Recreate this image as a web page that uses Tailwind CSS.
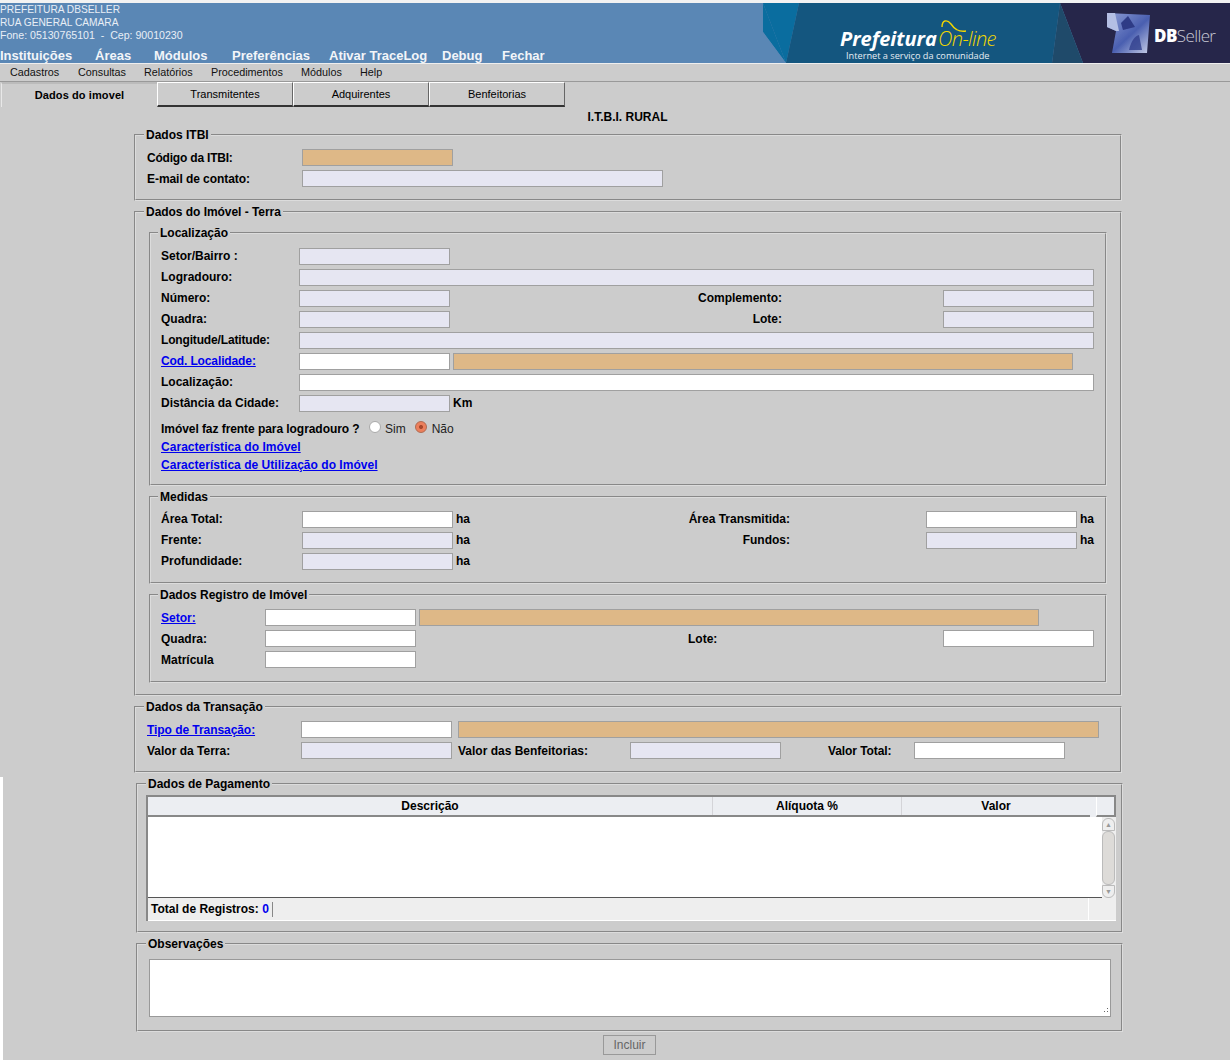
<!DOCTYPE html>
<html lang="pt-BR">
<head>
    <meta charset="UTF-8">
    <title>I.T.B.I. Rural</title>
    <script src="https://cdn.jsdelivr.net/npm/@tailwindcss/browser@4"></script>
</head>
<body class="bg-white font-['Liberation_Sans',Arial,sans-serif] text-[12px] text-black overflow-hidden">

    <!-- Header -->
    <div class="h-[3px] bg-[#f2f2f2]"></div>
    <header class="relative h-[60px] bg-[#5a87b5] text-white">
        <div class="text-[10.2px] leading-[13px] text-[#e8eef5]">
            <p>PREFEITURA DBSELLER</p>
            <p>RUA GENERAL CAMARA</p>
            <p class="text-[10.6px] whitespace-pre">Fone: 05130765101  -  Cep: 90010230</p>
        </div>
        <nav class="flex mt-[6px] text-[13px] leading-[15px] font-bold text-[#f2f5f9]">
            <a class="w-[95px]">Instituições</a>
            <a class="w-[59px]">Áreas</a>
            <a class="w-[78px]">Módulos</a>
            <a class="w-[97px]">Preferências</a>
            <a class="w-[113px]">Ativar TraceLog</a>
            <a class="w-[60px]">Debug</a>
            <a>Fechar</a>
        </nav>

        <!-- Banner -->
        <div class="absolute top-0 right-0 w-[467px] h-[60px] overflow-hidden">
            <svg width="467" height="60" viewBox="0 0 467 60" class="absolute inset-0">
                <defs>
                    <linearGradient id="cube" x1="0" y1="0" x2="1" y2="1">
                        <stop offset="0" stop-color="#8f9fd6"/>
                        <stop offset="0.55" stop-color="#4a5fb0"/>
                        <stop offset="1" stop-color="#c8cfe8"/>
                    </linearGradient>
                    <filter id="soft"><feGaussianBlur stdDeviation="0.6"/></filter>
                </defs>
                <polygon points="0,0 36,0 23,60" fill="#0a6d9f"/>
                <polygon points="0,0 0,29 23,60" fill="#0a6d9f"/>
                <polygon points="0,29 23,60 0,60" fill="#5a87b5"/>
                <polygon points="36,0 297,0 289,60 23,60" fill="#14567f"/>
                <polygon points="297,0 467,0 467,60 320,60" fill="#26264a"/>
                <polygon points="297,0 320,60 289,60" fill="#1f4a6a"/>
                <path d="M179 24 C179 17 184 16 188 21 C192 27 196 29 203 28" fill="none" stroke="#f2d600" stroke-width="1.4"/>
                <!-- DBSeller cube -->
                <g filter="url(#soft)">
                    <polygon points="344,10 387,12 384,50 349,50 353,28 344,24" fill="url(#cube)"/>
                    <polygon points="344,10 352,10 356,28 353,28 344,24" fill="#b4bfe4"/>
                    <polygon points="358,20 365,13 372,24 360,27" fill="#2d3a86"/>
                    <path d="M366 47 C368 38 372 33 376 32 L379 47 Z" fill="#2f3f8c" opacity="0.8"/>
                </g>
            </svg>
            <span class="absolute left-[77px] top-[25px] font-['Open_Sans',sans-serif] italic font-bold text-[20px] leading-[22px] text-white">Prefeitura</span>
            <span class="absolute left-[175px] top-[25px] font-['Open_Sans',sans-serif] italic font-light text-[20px] leading-[22px] tracking-[-0.6px] text-[#f2d600]">On-line</span>
            <span class="absolute left-[83px] top-[47px] font-['Open_Sans',sans-serif] text-[9.2px] leading-[11px] text-[#e6edf3]">Internet a serviço da comunidade</span>
            <span class="absolute left-[391px] top-[21px] font-['Open_Sans',sans-serif] font-light text-[17px] leading-[24px] tracking-[-0.6px] text-[#c9cad6]"><b class="text-white font-extrabold">DB</b>Seller</span>
        </div>
    </header>
    <div class="h-px bg-[#eeeeee]"></div>

    <div class="bg-[#cccccc] h-[713px]">
        <!-- Menu -->
        <nav class="flex h-[17px] items-center pl-[10px] text-[10.8px] text-[#111]">
            <a class="w-[68px]">Cadastros</a>
            <a class="w-[66px]">Consultas</a>
            <a class="w-[67px]">Relatórios</a>
            <a class="w-[90px]">Procedimentos</a>
            <a class="w-[59px]">Módulos</a>
            <a>Help</a>
        </nav>
        <div class="h-px bg-[#999999]"></div>

        <!-- Tabs -->
        <div class="flex h-[25px] text-[11px]">
            <div class="ml-[1px] w-[156px] flex items-center justify-center pb-[1px] border-l border-[#e8e8e8] border-t-2 border-t-[#bbbbbb] font-bold tracking-[0.1px]">Dados do imovel</div>
            <div class="w-[136px] flex items-center justify-center border-l border-t border-white border-r border-r-[#666] border-b-2 border-b-[#333]">Transmitentes</div>
            <div class="w-[136px] flex items-center justify-center border-l border-t border-white border-r border-r-[#666] border-b-2 border-b-[#333]">Adquirentes</div>
            <div class="w-[136px] flex items-center justify-center border-l border-t border-white border-r border-r-[#666] border-b-2 border-b-[#333]">Benfeitorias</div>
        </div>

        <h1 class="h-[20px] pt-[3px] text-center font-bold leading-[14px] pl-[25px]">I.T.B.I. RURAL</h1>

        <form class="ml-[134px] w-[988px]">
            <!-- Dados ITBI -->
            <fieldset class="border-2 [border-style:groove] border-[#dcdcdc] pl-[11px] pb-[10px] pt-[5px] mt-px">
                <legend class="ml-[-3px] px-[2px] font-bold leading-[14px]">Dados ITBI</legend>
                <div class="flex items-center h-[21px]">
                    <label class="w-[155px] font-bold tracking-[-0.2px]">Código da ITBI:</label>
                    <input class="w-[151px] h-[17px] border border-[#a0a0a0] bg-[#deb887]">
                </div>
                <div class="flex items-center h-[21px]">
                    <label class="w-[155px] font-bold tracking-[-0.06px]">E-mail de contato:</label>
                    <input class="w-[361px] h-[17px] border border-[#a0a0a0] bg-[#e6e6f2]">
                </div>
            </fieldset>

            <!-- Dados do Imovel -->
            <fieldset class="border-2 [border-style:groove] border-[#dcdcdc] px-[13px] pb-[11px] pt-[7px] mt-[4px]">
                <legend class="ml-[-5px] px-[2px] font-bold leading-[14px] tracking-[-0.04px]">Dados do Imóvel - Terra</legend>

                <fieldset class="border-2 [border-style:groove] border-[#dcdcdc] pl-[10px] pr-[11px] pb-[10px] pt-[6px]">
                    <legend class="ml-[-3px] px-[2px] font-bold leading-[14px]">Localização</legend>
                    <div class="flex items-center h-[21px]">
                        <label class="w-[138px] mb-[2px] font-bold">Setor/Bairro :</label>
                        <input class="w-[151px] h-[17px] border border-[#a0a0a0] bg-[#e6e6f2]">
                    </div>
                    <div class="flex items-center h-[21px]">
                        <label class="w-[138px] mb-[2px] font-bold">Logradouro:</label>
                        <input class="flex-1 h-[17px] border border-[#a0a0a0] bg-[#e6e6f2]">
                    </div>
                    <div class="flex items-center h-[21px]">
                        <label class="w-[138px] mb-[2px] font-bold">Número:</label>
                        <input class="w-[151px] h-[17px] border border-[#a0a0a0] bg-[#e6e6f2]">
                        <label class="w-[332px] mb-[2px] text-right font-bold">Complemento:</label>
                        <input class="ml-auto w-[151px] h-[17px] border border-[#a0a0a0] bg-[#e6e6f2]">
                    </div>
                    <div class="flex items-center h-[21px]">
                        <label class="w-[138px] mb-[2px] font-bold">Quadra:</label>
                        <input class="w-[151px] h-[17px] border border-[#a0a0a0] bg-[#e6e6f2]">
                        <label class="w-[332px] mb-[2px] text-right font-bold">Lote:</label>
                        <input class="ml-auto w-[151px] h-[17px] border border-[#a0a0a0] bg-[#e6e6f2]">
                    </div>
                    <div class="flex items-center h-[21px]">
                        <label class="w-[138px] mb-[2px] font-bold tracking-[-0.16px]">Longitude/Latitude:</label>
                        <input class="flex-1 h-[17px] border border-[#a0a0a0] bg-[#e6e6f2]">
                    </div>
                    <div class="flex items-center h-[21px]">
                        <a class="w-[138px] mb-[2px] font-bold text-[#0000ee] underline tracking-[-0.12px]">Cod. Localidade:</a>
                        <input class="w-[151px] h-[17px] border border-[#a0a0a0] bg-white">
                        <input class="ml-[3px] w-[620px] h-[17px] border border-[#a0a0a0] bg-[#deb887]">
                    </div>
                    <div class="flex items-center h-[21px]">
                        <label class="w-[138px] mb-[2px] font-bold">Localização:</label>
                        <input class="flex-1 h-[17px] border border-[#a0a0a0] bg-white">
                    </div>
                    <div class="flex items-center h-[21px]">
                        <label class="w-[138px] mb-[2px] font-bold">Distância da Cidade:</label>
                        <input class="w-[151px] h-[17px] border border-[#a0a0a0] bg-[#e6e6f2]">
                        <span class="ml-[3px] mb-[2px] font-bold">Km</span>
                    </div>
                    <div class="flex items-center h-[19px] mt-[5px]">
                        <label class="w-[199px] font-bold whitespace-nowrap tracking-[-0.06px]">Imóvel faz frente para logradouro ?</label>
                        <input type="radio" name="frente" class="appearance-none ml-[9px] mb-[4px] w-[12px] h-[12px] rounded-full border border-[#aaaaaa] bg-white">
                        <span class="ml-[4px] text-[#222]">Sim</span>
                        <input type="radio" name="frente" checked class="appearance-none ml-[9px] mb-[4px] w-[12px] h-[12px] rounded-full border border-[#b06a50] bg-[radial-gradient(circle,#a8482c_22%,#ec7f5c_34%)]">
                        <span class="ml-[5px] text-[#222]">Não</span>
                    </div>
                    <div class="flex items-center h-[18px]"><a class="font-bold text-[#0000ee] underline tracking-[0.04px]">Característica do Imóvel</a></div>
                    <div class="flex items-center h-[18px]"><a class="font-bold text-[#0000ee] underline tracking-[0.03px]">Característica de Utilização do Imóvel</a></div>
                </fieldset>

                <fieldset class="border-2 [border-style:groove] border-[#dcdcdc] pl-[10px] pr-[11px] pb-[10px] pt-[5px] mt-[4px]">
                    <legend class="ml-[-3px] px-[2px] font-bold leading-[14px]">Medidas</legend>
                    <div class="flex items-center h-[21px]">
                        <label class="w-[141px] mb-[2px] font-bold">Área Total:</label>
                        <input class="w-[151px] h-[17px] border border-[#a0a0a0] bg-white">
                        <span class="ml-[3px] mb-[2px] w-[17px] font-bold">ha</span>
                        <label class="w-[317px] mb-[2px] text-right font-bold">Área Transmitida:</label>
                        <input class="ml-auto w-[151px] h-[17px] border border-[#a0a0a0] bg-white">
                        <span class="ml-[3px] mb-[2px] font-bold">ha</span>
                    </div>
                    <div class="flex items-center h-[21px]">
                        <label class="w-[141px] mb-[2px] font-bold">Frente:</label>
                        <input class="w-[151px] h-[17px] border border-[#a0a0a0] bg-[#e6e6f2]">
                        <span class="ml-[3px] mb-[2px] w-[17px] font-bold">ha</span>
                        <label class="w-[317px] mb-[2px] text-right font-bold">Fundos:</label>
                        <input class="ml-auto w-[151px] h-[17px] border border-[#a0a0a0] bg-[#e6e6f2]">
                        <span class="ml-[3px] mb-[2px] font-bold">ha</span>
                    </div>
                    <div class="flex items-center h-[21px]">
                        <label class="w-[141px] mb-[2px] font-bold">Profundidade:</label>
                        <input class="w-[151px] h-[17px] border border-[#a0a0a0] bg-[#e6e6f2]">
                        <span class="ml-[3px] mb-[2px] font-bold">ha</span>
                    </div>
                </fieldset>

                <fieldset class="border-2 [border-style:groove] border-[#dcdcdc] pl-[10px] pr-[11px] pb-[11px] pt-[5px] mt-[4px]">
                    <legend class="ml-[-3px] px-[2px] font-bold leading-[14px]">Dados Registro de Imóvel</legend>
                    <div class="flex items-center h-[21px]">
                        <a class="w-[104px] font-bold text-[#0000ee] underline">Setor:</a>
                        <input class="w-[151px] h-[17px] border border-[#a0a0a0] bg-white">
                        <input class="ml-[3px] w-[620px] h-[17px] border border-[#a0a0a0] bg-[#deb887]">
                    </div>
                    <div class="flex items-center h-[21px]">
                        <label class="w-[104px] font-bold">Quadra:</label>
                        <input class="w-[151px] h-[17px] border border-[#a0a0a0] bg-white">
                        <label class="ml-[272px] font-bold">Lote:</label>
                        <input class="ml-auto w-[151px] h-[17px] border border-[#a0a0a0] bg-white">
                    </div>
                    <div class="flex items-center h-[21px]">
                        <label class="w-[104px] font-bold">Matrícula</label>
                        <input class="w-[151px] h-[17px] border border-[#a0a0a0] bg-white">
                    </div>
                </fieldset>
            </fieldset>

            <!-- Dados da Transacao -->
            <fieldset class="border-2 [border-style:groove] border-[#dcdcdc] pl-[11px] pb-[10px] pt-[5px] mt-[4px]">
                <legend class="ml-[-3px] px-[2px] font-bold leading-[14px]">Dados da Transação</legend>
                <div class="flex items-center h-[21px]">
                    <a class="w-[154px] font-bold text-[#0000ee] underline tracking-[-0.06px]">Tipo de Transação:</a>
                    <input class="w-[151px] h-[17px] border border-[#a0a0a0] bg-white">
                    <input class="ml-[6px] w-[641px] h-[17px] border border-[#a0a0a0] bg-[#deb887]">
                </div>
                <div class="flex items-center h-[21px]">
                    <label class="w-[154px] font-bold">Valor da Terra:</label>
                    <input class="w-[151px] h-[17px] border border-[#a0a0a0] bg-[#e6e6f2]">
                    <label class="ml-[6px] w-[172px] font-bold">Valor das Benfeitorias:</label>
                    <input class="w-[151px] h-[17px] border border-[#a0a0a0] bg-[#e6e6f2]">
                    <label class="ml-[47px] w-[86px] font-bold tracking-[-0.08px]">Valor Total:</label>
                    <input class="w-[151px] h-[17px] border border-[#a0a0a0] bg-white">
                </div>
            </fieldset>
        </form>
    </div>

    <div class="ml-[3px] h-[283px] bg-[#cccccc] overflow-hidden">
        <div class="ml-[133px] w-[987px]">
            <!-- Dados de Pagamento -->
            <fieldset class="border-2 [border-style:groove] border-[#dcdcdc] pl-[8px] pb-[10px] pt-[4px]">
                <legend class="px-[2px] font-bold leading-[14px]">Dados de Pagamento</legend>
                <div class="w-[970px] border-t-2 border-l-2 border-[#888888] bg-white">
                    <div class="flex h-[20px] bg-[#eceef2]">
                        <div class="flex w-[942px] border-b-2 border-[#888888] font-bold">
                            <div class="w-[565px] text-center leading-[18px] border-r border-[#d4d4d8]">Descrição</div>
                            <div class="w-[189px] text-center leading-[18px] border-r border-[#d4d4d8]">Alíquota %</div>
                            <div class="flex-1 text-center leading-[18px]">Valor</div>
                        </div>
                        <div class="w-[6px]"></div>
                        <div class="flex-1 border-l border-l-white border-r-2 border-b-2 border-[#888888]"></div>
                    </div>
                    <div class="flex h-[81px]">
                        <div class="w-[954px] border-b border-b-[#555555]"></div>
                        <div class="flex-1 flex flex-col bg-[#eeeeee] pt-px pr-px">
                            <div class="h-[13px] border border-[#bbbbbb] rounded-t-[6px] text-[#999] text-[7px] leading-[11px] text-center">▲</div>
                            <div class="h-[54px] border border-[#bbbbbb] rounded-[6px] bg-[#dddbd8]"></div>
                            <div class="h-[13px] border border-[#bbbbbb] rounded-b-[6px] text-[#999] text-[7px] leading-[11px] text-center">▼</div>
                        </div>
                    </div>
                    <div class="flex h-[23px] bg-[#eeeeee] border-b border-b-white">
                        <div class="w-[941px] h-[22px] pl-[3px] flex items-center font-bold border-r border-r-white">
                            <span>Total de Registros: <span class="text-[#0000ee]">0</span></span>
                            <span class="ml-[3px] w-px h-[15px] bg-[#888888]"></span>
                        </div>
                    </div>
                </div>
            </fieldset>

            <!-- Observacoes -->
            <fieldset class="border-2 [border-style:groove] border-[#dcdcdc] pl-[11px] pb-[13px] pt-[8px] mt-[4px]">
                <legend class="ml-[-3px] px-[2px] font-bold leading-[14px]">Observações</legend>
                <div class="relative w-[962px] h-[58px]">
                    <textarea class="block w-full h-full resize-none border border-[#999999] bg-white"></textarea>
                    <svg width="6" height="6" viewBox="0 0 6 6" class="absolute right-[2px] bottom-[3px]">
                        <rect x="4" y="0" width="1" height="1" fill="#666"/>
                        <rect x="4" y="3" width="1" height="1" fill="#666"/>
                        <rect x="1" y="3" width="1" height="1" fill="#666"/>
                    </svg>
                </div>
            </fieldset>

            <div class="flex mt-[3px] pl-[467px]">
                <button type="button" class="w-[53px] h-[20px] border border-[#999999] bg-[#cccccc] text-[#666666] text-[12px]">Incluir</button>
            </div>
        </div>
    </div>
</body>
</html>
